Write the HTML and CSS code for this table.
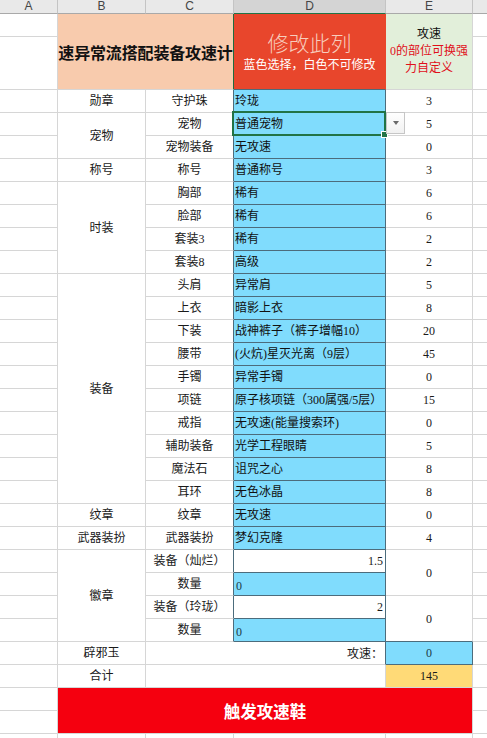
FILE: index.html
```html
<!DOCTYPE html>
<html lang="zh">
<head>
<meta charset="utf-8">
<title>攻速计算</title>
<link rel="stylesheet" href="styles.css">
</head>
<body>
<table class="sheet">
  <colgroup>
    <col class="ca"><col class="cb"><col class="cc"><col class="cd"><col class="ce"><col class="cf">
  </colgroup>
  <tr class="hr">
    <td class="hd">A</td><td class="hd">B</td><td class="hd">C</td><td class="hd hd-sel">D</td><td class="hd">E</td><td class="hd"></td>
  </tr>
  <tr class="t1">
    <td></td>
    <td colspan="2" rowspan="2" class="title-b">速异常流搭配装备攻速计</td>
    <td rowspan="2" class="title-d"><div class="big">修改此列</div><div class="sub">蓝色选择，白色不可修改</div></td>
    <td rowspan="2" class="title-e"><div>攻速</div><div class="red">0的部位可换强</div><div class="red">力自定义</div></td>
    <td></td>
  </tr>
  <tr class="t2"><td></td><td></td></tr>

  <tr class="r"><td></td><td>勋章</td><td class="dk">守护珠</td><td class="blue">玲珑</td><td>3</td><td></td></tr>
  <tr class="r"><td></td><td rowspan="2">宠物</td><td class="dk">宠物</td><td class="blue selcell"><span class="txt">普通宠物</span><span class="sel"><span class="handle"></span></span><span class="dd"><span class="tri"></span></span></td><td>5</td><td></td></tr>
  <tr class="r"><td></td><td class="dk">宠物装备</td><td class="blue">无攻速</td><td>0</td><td></td></tr>
  <tr class="r"><td></td><td>称号</td><td class="dk">称号</td><td class="blue">普通称号</td><td>3</td><td></td></tr>
  <tr class="r"><td></td><td rowspan="4">时装</td><td class="dk">胸部</td><td class="blue">稀有</td><td>6</td><td></td></tr>
  <tr class="r"><td></td><td class="dk">脸部</td><td class="blue">稀有</td><td>6</td><td></td></tr>
  <tr class="r"><td></td><td class="dk">套装3</td><td class="blue">稀有</td><td>2</td><td></td></tr>
  <tr class="r"><td></td><td class="dk">套装8</td><td class="blue">高级</td><td>2</td><td></td></tr>
  <tr class="r"><td></td><td rowspan="10">装备</td><td class="dk">头肩</td><td class="blue">异常肩</td><td>5</td><td></td></tr>
  <tr class="r"><td></td><td class="dk">上衣</td><td class="blue">暗影上衣</td><td>8</td><td></td></tr>
  <tr class="r"><td></td><td class="dk">下装</td><td class="blue">战神裤子（裤子增幅10）</td><td>20</td><td></td></tr>
  <tr class="r"><td></td><td class="dk">腰带</td><td class="blue">(火炕)星灭光离（9层）</td><td>45</td><td></td></tr>
  <tr class="r"><td></td><td class="dk">手镯</td><td class="blue">异常手镯</td><td>0</td><td></td></tr>
  <tr class="r"><td></td><td class="dk">项链</td><td class="blue">原子核项链（300属强/5层）</td><td>15</td><td></td></tr>
  <tr class="r"><td></td><td class="dk">戒指</td><td class="blue">无攻速(能量搜索环)</td><td>0</td><td></td></tr>
  <tr class="r"><td></td><td class="dk">辅助装备</td><td class="blue">光学工程眼睛</td><td>5</td><td></td></tr>
  <tr class="r"><td></td><td class="dk">魔法石</td><td class="blue">诅咒之心</td><td>8</td><td></td></tr>
  <tr class="r"><td></td><td class="dk">耳环</td><td class="blue">无色冰晶</td><td>8</td><td></td></tr>
  <tr class="r"><td></td><td>纹章</td><td class="dk">纹章</td><td class="blue">无攻速</td><td>0</td><td></td></tr>
  <tr class="r"><td></td><td>武器装扮</td><td class="dk">武器装扮</td><td class="blue">梦幻克隆</td><td>4</td><td></td></tr>
  <tr class="r"><td></td><td rowspan="4">徽章</td><td class="dk">装备（灿烂）</td><td class="white-dk num-r">1.5</td><td rowspan="2">0</td><td></td></tr>
  <tr class="r"><td></td><td class="dk">数量</td><td class="blue num-l">0</td><td></td></tr>
  <tr class="r"><td></td><td class="dk">装备（玲珑）</td><td class="white-dk num-r">2</td><td rowspan="2" class="bb-dk">0</td><td></td></tr>
  <tr class="r"><td></td><td class="dk">数量</td><td class="blue num-l">0</td><td></td></tr>
  <tr class="r"><td></td><td>辟邪玉</td><td colspan="2" class="dk atk">攻速：</td><td class="blue-e">0</td><td></td></tr>
  <tr class="r"><td></td><td>合计</td><td colspan="2"></td><td class="yellow">145</td><td></td></tr>
  <tr class="r"><td></td><td colspan="4" rowspan="2" class="btn">触发攻速鞋</td><td></td></tr>
  <tr class="r"><td></td><td></td></tr>
  <tr class="r"><td></td><td></td><td></td><td></td><td></td><td></td></tr>
</table>
</body>
</html>
```
FILE: styles.css
```css
html, body {
  margin: 0;
  padding: 0;
  background: #ffffff;
  overflow: hidden;
}

body {
  font-family: "Liberation Serif", "Noto Sans CJK SC", serif;
  font-size: 12px;
  color: #1a1a1a;
}

.sheet {
  border-collapse: separate;
  border-spacing: 0;
  table-layout: fixed;
  width: 503px;
}

.ca { width: 58px; }
.cb { width: 88px; }
.cc { width: 88px; }
.cd { width: 152px; }
.ce { width: 87px; }
.cf { width: 30px; }

.sheet td {
  border-right: 1px solid #d6d6d6;
  border-bottom: 1px solid #d6d6d6;
  padding: 0;
  text-align: center;
  vertical-align: middle;
  white-space: nowrap;
  overflow: hidden;
  line-height: 16px;
}

.hr { height: 14px; }
.t1 { height: 23px; }
.t2 { height: 53px; }
.r { height: 23px; }

.sheet td.hd {
  background: #e9e9e9;
  border-right: 1px solid #c4c4c4;
  border-bottom: 1px solid #a9a9a9;
  font-family: "Liberation Sans", sans-serif;
  font-size: 12px;
  line-height: 13px;
  color: #454545;
}

.sheet td.hd-sel {
  background: #d4d4d4;
  border-bottom: 1px solid #217346;
}

.sheet td.title-b {
  background: #f8cbad;
  font-family: "Noto Sans CJK SC", sans-serif;
  font-weight: bold;
  font-size: 16px;
  letter-spacing: -0.15px;
  color: #111;
  border-right: 1px solid #1f6b3f;
  padding-top: 1px;
}

.sheet td.title-d {
  background: #e8462c;
  font-family: "Noto Sans CJK SC", sans-serif;
  border-right: 1px solid #e8462c;
  border-bottom: 1px solid #4c6c7c;
  padding-bottom: 1px;
}

.title-d .big {
  font-size: 21px;
  line-height: 26px;
  color: #f7cdbd;
  font-weight: 300;
}

.title-d .sub {
  font-size: 12px;
  line-height: 18px;
  color: #ffffff;
}

.sheet td.title-e {
  background: #e2efda;
  font-size: 12px;
  line-height: 17px;
  color: #111;
  padding-bottom: 1px;
}

.title-e .red {
  color: #e0101a;
}

.sheet td.dk {
  border-right: 1px solid #4c6c7c;
}

.sheet td.blue {
  background: #80dcfd;
  border-right: 1px solid #4c6c7c;
  border-bottom: 1px solid #4c6c7c;
  text-align: left;
  padding-left: 1px;
  color: #111;
}

.sheet td.white-dk {
  border-right: 1px solid #4c6c7c;
  border-bottom: 1px solid #4c6c7c;
}

.sheet td.num-r {
  text-align: right;
  padding-right: 2px;
}

.sheet td.num-l {
  text-align: left;
  padding-left: 2px;
  padding-top: 3px;
  color: #1d3a48;
}

.sheet td.bb-dk {
  border-bottom: 1px solid #4c6c7c;
}

.sheet td.atk {
  text-align: right;
  padding-right: 2px;
  font-family: "Noto Sans CJK SC", sans-serif;
}

.sheet td.blue-e {
  background: #80dcfd;
  border-right: 1px solid #4c6c7c;
  border-bottom: 1px solid #4c6c7c;
  color: #1d3a48;
}

.sheet td.yellow {
  background: #ffda77;
}

.sheet td.btn {
  background: #f5000f;
  color: #ffffff;
  font-family: "Noto Sans CJK SC", sans-serif;
  font-weight: bold;
  font-size: 16.5px;
  border-right: 1px solid #d6d6d6;
}

.sheet td.selcell {
  position: relative;
  overflow: visible;
}

.sel {
  position: absolute;
  left: -2px;
  top: -2px;
  width: 154px;
  height: 25px;
  box-sizing: border-box;
  border: 2px solid #217346;
  pointer-events: none;
}

.handle {
  position: absolute;
  right: -4px;
  bottom: -4px;
  width: 5px;
  height: 5px;
  background: #217346;
  border: 1px solid #ffffff;
}

.dd {
  position: absolute;
  left: 152px;
  top: -1px;
  width: 19px;
  height: 22px;
  box-sizing: border-box;
  background: linear-gradient(#ffffff, #f1f1f1);
  border: 1px solid #c6c6c6;
  display: flex;
  align-items: center;
  justify-content: center;
}

.tri {
  width: 0;
  height: 0;
  border-left: 3.5px solid transparent;
  border-right: 3.5px solid transparent;
  border-top: 4px solid #6a6a6a;
}
```
